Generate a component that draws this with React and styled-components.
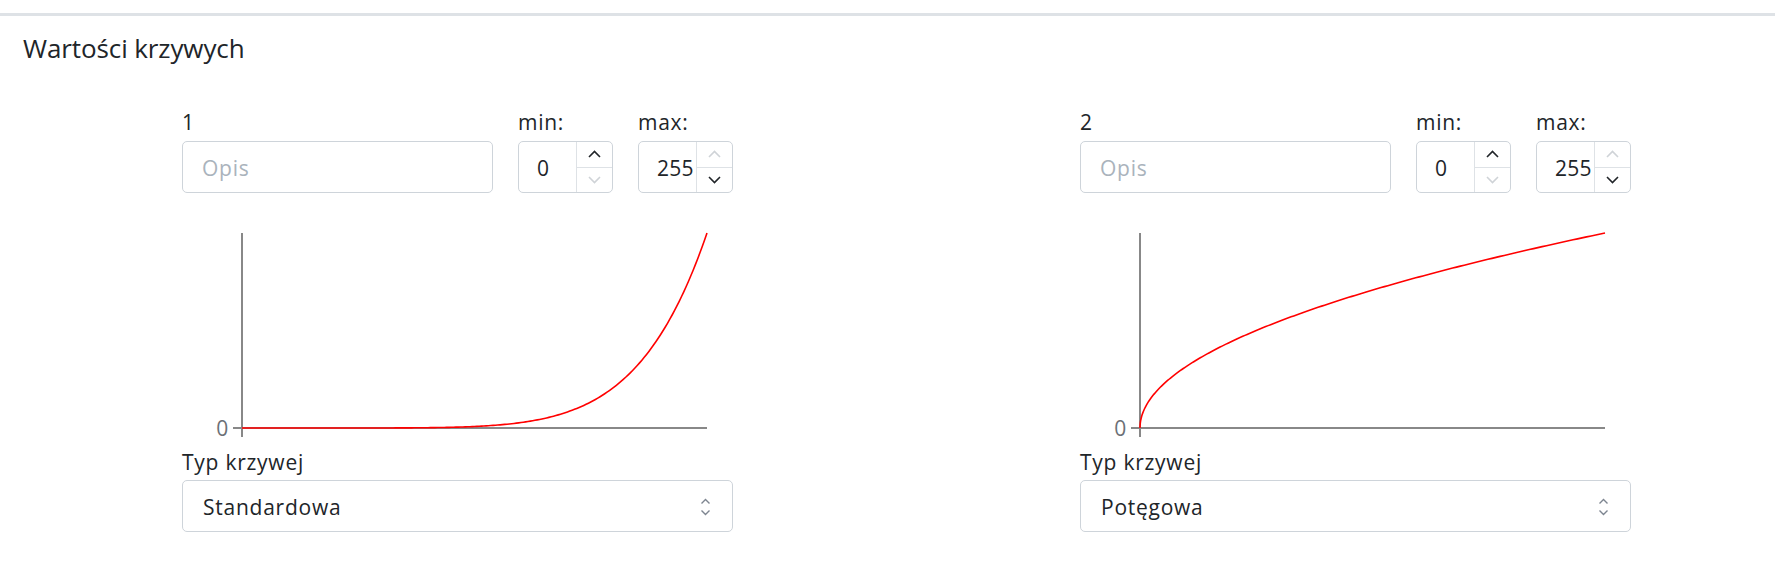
import React from 'react'
import styled, { createGlobalStyle } from 'styled-components'

const GlobalStyle = createGlobalStyle`
  body {
    margin: 0;
    background: #ffffff;
    font-family: "Open Sans", "Noto Sans", sans-serif;
    color: #212529;
  }
`

const Page = styled.div`
  width: 1775px;
  height: 563px;
  overflow: hidden;
`

const TopRule = styled.div`
  height: 3px;
  margin-top: 13px;
  background: #dee2e6;
`

const Title = styled.h5`
  margin: 17px 0 0 0;
  padding-left: 23px;
  font-size: 26px;
  line-height: 31px;
  font-weight: 400;
  letter-spacing: -0.1px;
`

const Columns = styled.div`
  display: flex;
  gap: 347px;
  padding-left: 182px;
  margin-top: 46px;
  letter-spacing: 0.75px;
`

const Column = styled.div`
  width: 551px;
  display: flex;
  flex-direction: column;
`

const HeaderRow = styled.div`
  display: grid;
  grid-template-columns: 1fr 95px 95px;
  column-gap: 25px;
`

const Field = styled.div`
  display: flex;
  flex-direction: column;
`

const Label = styled.label`
  font-size: 21px;
  line-height: 25px;
  margin-bottom: ${(p) => p.gap || 6}px;
  margin-top: ${(p) => p.top || 0}px;
`

const TextInput = styled.input`
  box-sizing: border-box;
  height: 52px;
  width: 100%;
  border: 1px solid #ced4da;
  border-radius: 5px;
  padding: 2px 19px 0;
  font-family: inherit;
  font-size: 21px;
  letter-spacing: 0.75px;
  color: #212529;
  outline: none;
  &::placeholder {
    color: #aab3bc;
  }
`

const NumberBox = styled.div`
  box-sizing: border-box;
  height: 52px;
  display: flex;
  border: 1px solid #ced4da;
  border-radius: 5px;
  overflow: hidden;
`

const NumberValue = styled.div`
  flex: 1;
  display: flex;
  align-items: center;
  padding: 2px 0 0 18px;
  font-size: 21px;
  letter-spacing: 0.3px;
  white-space: nowrap;
`

const Spinner = styled.div`
  width: 35px;
  display: flex;
  flex-direction: column;
  border-left: 1px solid #dee2e6;
`

const SpinButton = styled.div`
  flex: 1;
  display: flex;
  align-items: center;
  justify-content: center;
  color: ${(p) => (p.disabled ? '#cfd3d7' : '#212529')};
  & + & {
    border-top: 1px solid #dee2e6;
  }
`

const Chart = styled.svg`
  display: block;
  margin-top: 20px;
`

const Select = styled.div`
  box-sizing: border-box;
  height: 52px;
  display: flex;
  align-items: center;
  justify-content: space-between;
  border: 1px solid #ced4da;
  border-radius: 5px;
  padding: 2px 21px 0 20px;
  font-size: 21px;
`

const Chevron = ({ up }) => (
  <svg width="13" height="8" viewBox="0 0 13 8">
    <path
      d={up ? 'M1 7 L6.5 1.5 L12 7' : 'M1 1 L6.5 6.5 L12 1'}
      fill="none"
      stroke="currentColor"
      strokeWidth="1.6"
    />
  </svg>
)

const UpDownIcon = () => (
  <svg width="11" height="18" viewBox="0 0 11 18">
    <path d="M1.5 5.5 L5.5 1.5 L9.5 5.5" fill="none" stroke="#7d8590" strokeWidth="1.4" />
    <path d="M1.5 12.5 L5.5 16.5 L9.5 12.5" fill="none" stroke="#7d8590" strokeWidth="1.4" />
  </svg>
)

const NumberField = ({ value, min, max }) => (
  <NumberBox>
    <NumberValue>{value}</NumberValue>
    <Spinner>
      <SpinButton disabled={value >= max}>
        <Chevron up />
      </SpinButton>
      <SpinButton disabled={value <= min}>
        <Chevron />
      </SpinButton>
    </Spinner>
  </NumberBox>
)

// chart geometry, relative to the column
const X0 = 60
const X1 = 525
const Y0 = 215
const Y1 = 20

const curvePath = (fn, sampling) => {
  const pts = []
  const n = 200
  for (let i = 0; i <= n; i++) {
    const t = sampling(i / n)
    const v = fn(t)
    pts.push(`${(X0 + t * (X1 - X0)).toFixed(2)},${(Y0 - v * (Y0 - Y1)).toFixed(2)}`)
  }
  return 'M' + pts.join(' L')
}

const CurveChart = ({ fn, sampling }) => (
  <Chart width="551" height="230" viewBox="0 0 551 230">
    <line x1={X0} y1={Y1} x2={X0} y2={224} stroke="#888" strokeWidth="2" />
    <line x1={51} y1={Y0} x2={X1} y2={Y0} stroke="#888" strokeWidth="2" />
    <text
      x="47"
      y="222.5"
      textAnchor="end"
      fontSize="21"
      fill="#6b7076"
      fontFamily="Open Sans, sans-serif"
    >
      0
    </text>
    <path d={curvePath(fn, sampling)} fill="none" stroke="#ff0000" strokeWidth="1.6" />
  </Chart>
)

const curves = [
  {
    id: 1,
    type: 'Standardowa',
    fn: (t) => Math.pow(t, 7),
    sampling: (s) => s,
  },
  {
    id: 2,
    type: 'Potęgowa',
    fn: (t) => Math.sqrt(t),
    sampling: (s) => s * s,
  },
]

const CurveColumn = ({ curve }) => (
  <Column>
    <HeaderRow>
      <Field>
        <Label>{curve.id}</Label>
        <TextInput placeholder="Opis" />
      </Field>
      <Field>
        <Label>min:</Label>
        <NumberField value={0} min={0} max={255} />
      </Field>
      <Field>
        <Label>max:</Label>
        <NumberField value={255} min={0} max={255} />
      </Field>
    </HeaderRow>
    <CurveChart fn={curve.fn} sampling={curve.sampling} />
    <Label top={7} gap={5}>
      Typ krzywej
    </Label>
    <Select>
      <span>{curve.type}</span>
      <UpDownIcon />
    </Select>
  </Column>
)

const App = () => {
  return (
    <Page>
      <GlobalStyle />
      <TopRule />
      <Title>Wartości krzywych</Title>
      <Columns>
        {curves.map((c) => (
          <CurveColumn key={c.id} curve={c} />
        ))}
      </Columns>
    </Page>
  )
}

export default App
